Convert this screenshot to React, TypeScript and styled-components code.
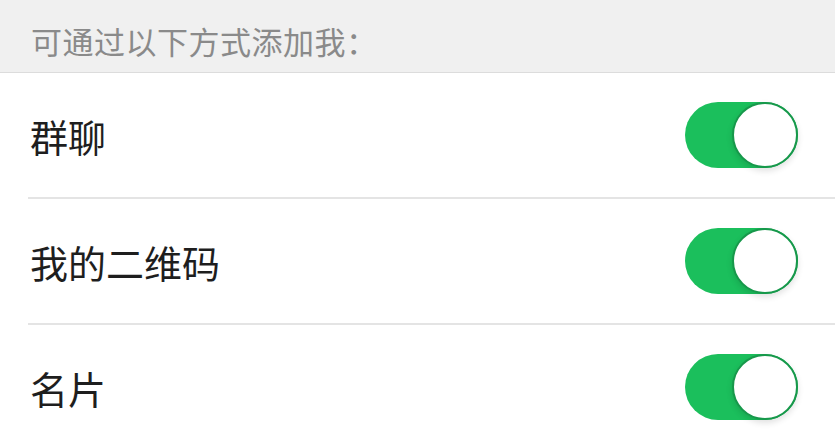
import React from "react";
import styled, { createGlobalStyle } from "styled-components";

const GlobalStyle = createGlobalStyle`
  html, body {
    margin: 0;
    padding: 0;
    background: #ffffff;
    font-family: "Noto Sans CJK SC", "Noto Sans", sans-serif;
  }
`;

const Page = styled.div`
  width: 835px;
  height: 442px;
  overflow: hidden;
  background: #ffffff;
`;

const SectionHeader = styled.div`
  height: 73px;
  box-sizing: border-box;
  display: flex;
  align-items: center;
  padding: 8px 0 0 31px;
  background: #f0f0f0;
  border-bottom: 1px solid #dcdcdc;
  color: #8a8a8a;
  font-size: 31px;
  letter-spacing: 0.5px;
`;

const List = styled.div`
  display: flex;
  flex-direction: column;
  padding-left: 28px;
`;

const Row = styled.div<{ $last?: boolean }>`
  height: 124px;
  display: flex;
  align-items: center;
  justify-content: space-between;
  padding-right: 37px;
  border-bottom: ${(p) => (p.$last ? "none" : "2px solid #e4e4e4")};
`;

const Label = styled.span`
  font-size: 38px;
  color: #1e1e1e;
  padding-left: 2px;
`;

const Track = styled.div<{ $on: boolean }>`
  position: relative;
  width: 113px;
  height: 66px;
  border-radius: 33px;
  background: ${(p) => (p.$on ? "#1bbf5c" : "#e6e6e6")};
  flex-shrink: 0;
`;

const Knob = styled.div<{ $on: boolean }>`
  position: absolute;
  top: 0;
  ${(p) => (p.$on ? "right: 0;" : "left: 0;")}
  width: 66px;
  height: 66px;
  box-sizing: border-box;
  border-radius: 50%;
  background: #ffffff;
  border: 2px solid ${(p) => (p.$on ? "#17984b" : "#d0d0d0")};
  box-shadow: 0 3px 6px rgba(0, 0, 0, 0.12);
`;

function Toggle({ on }: { on: boolean }) {
  return (
    <Track $on={on}>
      <Knob $on={on} />
    </Track>
  );
}

const options = [
  { label: "群聊", on: true },
  { label: "我的二维码", on: true },
  { label: "名片", on: true },
];

export default function App() {
  return (
    <Page>
      <GlobalStyle />
      <SectionHeader>可通过以下方式添加我：</SectionHeader>
      <List>
        {options.map((o, i) => (
          <Row key={o.label} $last={i === options.length - 1}>
            <Label>{o.label}</Label>
            <Toggle on={o.on} />
          </Row>
        ))}
      </List>
    </Page>
  );
}
